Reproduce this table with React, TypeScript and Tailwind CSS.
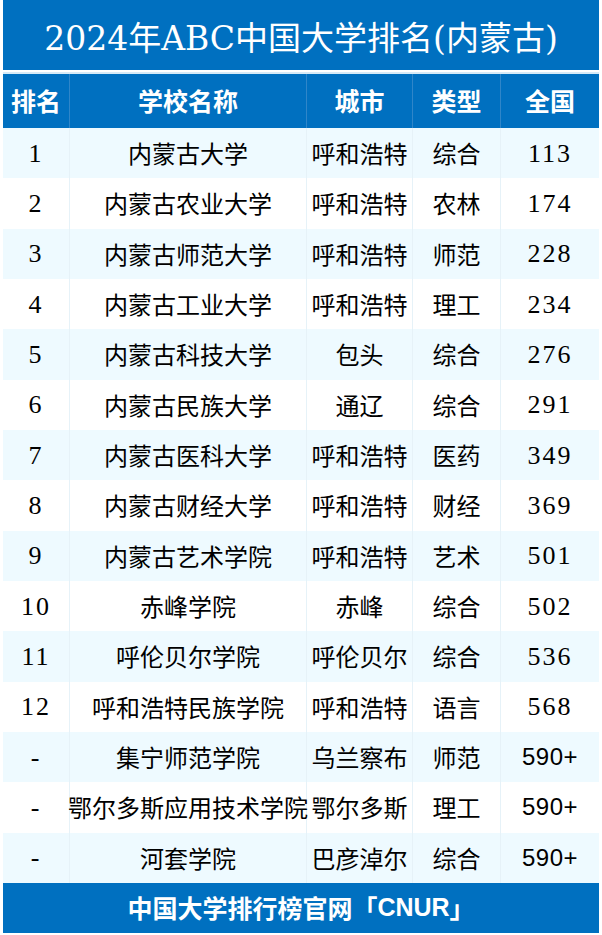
const rows: [string, string, string, string, string][] = [
  ["1", "内蒙古大学", "呼和浩特", "综合", "113"],
  ["2", "内蒙古农业大学", "呼和浩特", "农林", "174"],
  ["3", "内蒙古师范大学", "呼和浩特", "师范", "228"],
  ["4", "内蒙古工业大学", "呼和浩特", "理工", "234"],
  ["5", "内蒙古科技大学", "包头", "综合", "276"],
  ["6", "内蒙古民族大学", "通辽", "综合", "291"],
  ["7", "内蒙古医科大学", "呼和浩特", "医药", "349"],
  ["8", "内蒙古财经大学", "呼和浩特", "财经", "369"],
  ["9", "内蒙古艺术学院", "呼和浩特", "艺术", "501"],
  ["10", "赤峰学院", "赤峰", "综合", "502"],
  ["11", "呼伦贝尔学院", "呼伦贝尔", "综合", "536"],
  ["12", "呼和浩特民族学院", "呼和浩特", "语言", "568"],
  ["-", "集宁师范学院", "乌兰察布", "师范", "590+"],
  ["-", "鄂尔多斯应用技术学院", "鄂尔多斯", "理工", "590+"],
  ["-", "河套学院", "巴彦淖尔", "综合", "590+"],
];

const cols = ["w-[67px]", "w-[237px]", "w-[106px]", "w-[88px]", "w-[98px]"];
const cjk = "font-['Noto_Sans_CJK_SC',sans-serif]";
const num = "font-['Liberation_Serif','Noto_Sans_CJK_SC',serif] text-[26px] tracking-[2px]";

export default function App() {
  return (
    <div className="w-[602px] h-[935px] bg-white px-[3px] flex flex-col">
      <div className="h-[70px] bg-[#0070c0] flex items-center justify-center pt-[8px] text-white text-[33px] font-['DejaVu_Serif','Noto_Sans_CJK_SC',serif]">
        2024年ABC中国大学排名(内蒙古)
      </div>
      <div className="h-[2px]" />
      <div className="h-[2px] bg-[#d6eaf7]" />
      <div className={`h-[54px] bg-[#0070c0] flex text-white text-[25px] font-bold ${cjk}`}>
        {["排名", "学校名称", "城市", "类型", "全国"].map((h, i) => (
          <div
            key={h}
            className={`${cols[i]} flex items-center justify-center ${i < 4 ? "border-r border-[#2f86c9]" : ""}`}
          >
            {h}
          </div>
        ))}
      </div>
      <div className="h-[755px] grid grid-rows-[repeat(15,1fr)]">
        {rows.map((r, ri) => (
          <div key={ri} className={`flex text-black ${ri % 2 === 0 ? "bg-[#eefaff]" : "bg-white"}`}>
            {r.map((c, ci) => {
              const isNum = ci === 0 || ci === 4;
              const font = isNum
                ? c.endsWith("+")
                  ? "font-['Liberation_Sans',sans-serif] text-[24px] tracking-[0.5px]"
                  : num
                : `${cjk} text-[24px]`;
              return (
                <div
                  key={ci}
                  className={`${cols[ci]} flex items-center justify-center whitespace-nowrap ${font} ${ci < 4 ? "border-r border-[#e6f2f8]" : ""}`}
                >
                  {c}
                </div>
              );
            })}
          </div>
        ))}
      </div>
      <div className={`h-[50px] bg-[#0070c0] flex items-center justify-center text-white text-[25px] font-bold ${cjk}`}>
        中国大学排行榜官网「<span className="font-['Liberation_Sans',sans-serif]">CNUR</span>」
      </div>
    </div>
  );
}
